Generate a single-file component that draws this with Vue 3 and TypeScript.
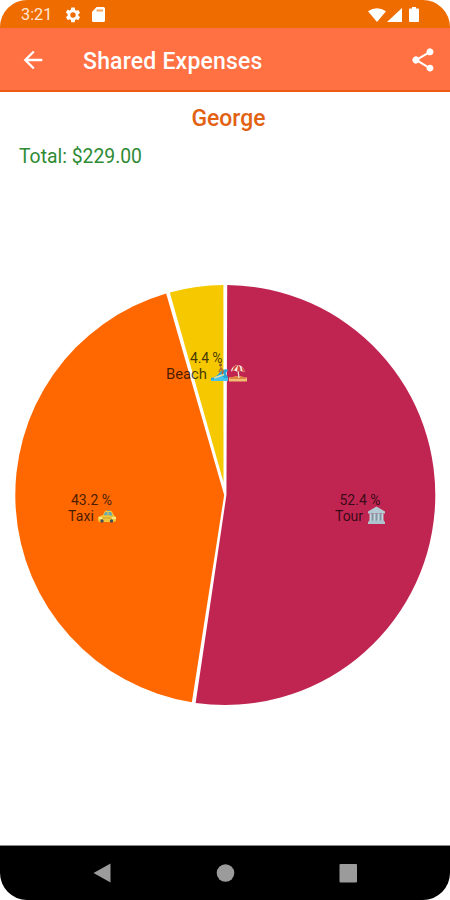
<script setup lang="ts">
interface Slice {
  name: string
  percent: number
  color: string
}

const slices: Slice[] = [
  { name: 'Tour', percent: 52.4, color: '#c02552' },
  { name: 'Taxi', percent: 43.2, color: '#ff6800' },
  { name: 'Beach', percent: 4.4, color: '#f5c800' },
]

const cx = 225.3
const cy = 403
const radius = 210
const separator = 3.8

function point(angle: number, r: number): [number, number] {
  return [cx + r * Math.sin(angle), cy - r * Math.cos(angle)]
}

let cursor = 0
const sectors = slices.map((slice) => {
  const start = cursor
  const end = start + (slice.percent / 100) * Math.PI * 2
  cursor = end
  const inset = separator / 2 / radius
  const [x1, y1] = point(start + inset, radius)
  const [x2, y2] = point(end - inset, radius)
  const mid = (start + end) / 2
  const halfAngle = Math.min((end - start) / 2, Math.PI / 2)
  const tip = (separator / 2) * (halfAngle < 1 ? 0.95 / Math.sin(halfAngle) : 0.6)
  const [x0, y0] = point(mid, tip)
  const large = end - start > Math.PI ? 1 : 0
  return { ...slice, d: `M${x0} ${y0}L${x1} ${y1}A${radius} ${radius} 0 ${large} 1 ${x2} ${y2}Z` }
})
</script>

<template>
  <div class="screen">
    <div class="status">
      <span class="clock">3:21</span>
      <svg class="gear" width="18" height="18" viewBox="0 0 24 24"><path d="M19.14 12.94c.04-.3.06-.61.06-.94s-.02-.64-.07-.94l2.03-1.58a.49.49 0 0 0 .12-.61l-1.92-3.32a.49.49 0 0 0-.59-.22l-2.39.96a7 7 0 0 0-1.62-.94l-.36-2.54A.48.48 0 0 0 13.92 2h-3.84a.48.48 0 0 0-.48.41l-.36 2.54c-.59.24-1.13.57-1.62.94l-2.39-.96a.49.49 0 0 0-.59.22L2.72 8.47a.48.48 0 0 0 .12.61l2.03 1.58a7.2 7.2 0 0 0 0 2.28l-2.03 1.58a.49.49 0 0 0-.12.61l1.92 3.32c.12.22.37.29.59.22l2.39-.96c.5.38 1.03.7 1.62.94l.36 2.54c.05.24.24.41.48.41h3.84c.24 0 .44-.17.48-.41l.36-2.54a7 7 0 0 0 1.62-.94l2.39.96c.22.08.47 0 .59-.22l1.92-3.32a.48.48 0 0 0-.12-.61zM12 15.6a3.6 3.6 0 1 1 0-7.2 3.6 3.6 0 0 1 0 7.2z" /></svg>
      <svg class="card" width="13" height="15" viewBox="0 0 13 15"><path d="M4.700 0H11.500Q13 0 13 1.500V13.500Q13 15 11.500 15H1.500Q0 15 0 13.500V4.700Z" /><path class="contacts" d="M4.500 2.600H11V4.400H4.500z" /></svg>
      <span class="spacer" />
      <svg width="18" height="14" viewBox="0 0 18 14"><path d="M0 3.200Q9-2.800 18 3.200L9 14Z" /></svg>
      <svg class="signal" width="15" height="14" viewBox="0 0 15 14"><path d="M15 0V14H0Z" /></svg>
      <svg class="battery" width="10" height="15" viewBox="0 0 10 15"><path d="M3 0H7V1.500H9Q10 1.500 10 2.500V14Q10 15 9 15H1Q0 15 0 14V2.500Q0 1.500 1 1.500H3Z" /></svg>
    </div>

    <header class="toolbar">
      <svg class="back" width="28" height="28" viewBox="0 0 24 24"><path d="M20 11H7.830l5.590-5.590L12 4l-8 8 8 8 1.410-1.410L7.830 13H20z" /></svg>
      <h1>Shared Expenses</h1>
      <svg class="share" width="28" height="28" viewBox="0 0 24 24"><path d="M18 16.080c-.76 0-1.440.3-1.960.77L8.910 12.700a3.300 3.300 0 0 0 0-1.400l7.050-4.110A3 3 0 1 0 15 5c0 .24.040.47.090.7L8.040 9.810a3 3 0 1 0 0 4.380l7.120 4.160a2.920 2.920 0 1 0 2.840-2.270z" /></svg>
    </header>

    <main>
      <svg class="chart" width="450" height="754" viewBox="0 0 450 754">
        <path v-for="s in sectors" :key="s.name" :d="s.d" :fill="s.color" />
        <g class="text">
          <text class="title" x="191.500" y="34" textLength="74" lengthAdjust="spacingAndGlyphs">George</text>
          <text class="total" x="19" y="70.500" textLength="123" lengthAdjust="spacingAndGlyphs">Total: $229.00</text>
          <text class="label" x="190" y="270.500" textLength="32.500">4.4 %</text>
          <text class="label" x="166" y="286.500" textLength="41" lengthAdjust="spacingAndGlyphs">Beach</text>
          <text class="label" x="71" y="412.500" textLength="41">43.2 %</text>
          <text class="label" x="68" y="428.500" textLength="26">Taxi</text>
          <text class="label" x="339.500" y="412.500" textLength="41">52.4 %</text>
          <text class="label" x="335" y="428.500" textLength="28">Tour</text>
        </g>
        <!-- surfer -->
        <g transform="translate(211 273)">
          <path d="M0 16V13Q6 12 9 7Q13 3 17.500 5Q13 8 17 12V16Z" fill="#2aa5d8" />
          <path d="M0 15Q7 13 10 9Q12 14 17 13V16H0Z" fill="#45c1ea" />
          <path d="M3 13L13 9.500" stroke="#e8e0a0" stroke-width="1.500" />
          <path d="M8 7L10 3L12 6L11 9" fill="none" stroke="#b86b32" stroke-width="1.600" />
          <circle cx="9.500" cy="0" r="1.500" fill="#8e5a2a" />
        </g>
        <!-- beach umbrella -->
        <g transform="translate(229 273)">
          <path d="M0 12.500H18V16.500H0Z" fill="#f2bd70" />
          <path d="M1 13L6 11H12L17 13V14H1Z" fill="#e18345" />
          <path d="M9 5L10 13" stroke="#e9e0d6" stroke-width="1.200" />
          <path d="M2 6.500Q3 0 9 0Q15 1 16 7L11.500 6L8 6.500L5 5.500Z" fill="#f3f0ed" />
          <path d="M5 1.500Q7 0 9 0L5 5.500L3 6ZM9 0Q12 2 11.500 6L8 6.500ZM12.500 1.500Q15.500 3 16 7L13.500 6Z" fill="#d7443b" />
        </g>
        <!-- taxi -->
        <g transform="translate(98 418)">
          <path d="M5 5L7 1Q11-.5 14 1.500L16 5.500L18 7V11L16 12H1L0 10V7Z" fill="#f3c638" />
          <path d="M5.500 5L7.500 2H9.500V5.500ZM10.500 2H13L14.500 5.500H10.500Z" fill="#65a9b4" />
          <path d="M9 0H12V1H9Z" fill="#78949c" />
          <path d="M1 8H4M14 8H18" stroke="#fff0a4" stroke-width="1.300" />
          <path d="M5 8H13" stroke="#c5a02c" stroke-width="1" />
          <circle cx="4" cy="11" r="1.700" fill="#46505a" />
          <circle cx="13.500" cy="11" r="1.700" fill="#46505a" />
        </g>
        <!-- classical building -->
        <g transform="translate(368 414.500)">
          <path d="M0 5L8.500 0L17 5V7H0Z" fill="#b2cbd5" />
          <path d="M2 7H15V15H2Z" fill="#8195a2" />
          <path d="M2.500 7V15M6.500 7V15M10.500 7V15M14.500 7V15" stroke="#c5d8df" stroke-width="1.900" />
          <path d="M1 14H16V15H17V17.500H0V15H1Z" fill="#adc3ce" />
        </g>
      </svg>
    </main>

    <nav>
      <svg width="450" height="54" viewBox="0 0 450 54">
        <path d="M110.500 17.500V36.500L93.500 27Z" />
        <circle cx="225.500" cy="27" r="8.800" />
        <rect x="339.500" y="18" width="17.500" height="18.500" rx="1" />
      </svg>
    </nav>
  </div>
</template>

<style>
body {
  margin: 0;
  background: #fff;
}
</style>

<style scoped>
.screen {
  display: flex;
  flex-direction: column;
  width: 450px;
  height: 900px;
  overflow: hidden;
  border-radius: 27px;
  background: #fff;
  font-family: Roboto, sans-serif;
}
svg {
  display: block;
  flex: none;
}
.status {
  display: flex;
  align-items: center;
  box-sizing: border-box;
  height: 28px;
  padding: 1px 31px 0 21px;
  background: #ef6c00;
  fill: #fff;
}
.clock {
  width: 43px;
  padding-top: 1px;
  color: #ffe6d5;
  font-size: 16.300px;
  line-height: 20px;
}
.card {
  margin-left: 10px;
}
.contacts {
  fill: #f6a25c;
}
.spacer {
  flex: 1;
}
.signal {
  margin-left: 1px;
}
.battery {
  margin-left: 7px;
}
.toolbar {
  display: flex;
  align-items: center;
  box-sizing: border-box;
  height: 64px;
  padding: 1px 13px 0 18.500px;
  border-bottom: 2px solid #f05a14;
  background: #ff7043;
  fill: #fff;
}
h1 {
  flex: 1;
  margin: 0 0 0 36.500px;
  padding-top: 4px;
  color: #fff;
  font-size: 23px;
  font-weight: 500;
  line-height: 30px;
  letter-spacing: 0.200px;
}
main {
  height: 753px;
}
.title {
  fill: #e26112;
  font-size: 23px;
  font-weight: 500;
}
.total {
  fill: #2e8b35;
  font-size: 20px;
}
.label {
  fill: #000;
  fill-opacity: 0.74;
  font-size: 14px;
}
nav {
  box-sizing: border-box;
  height: 55px;
  border-top: 1px solid #888;
  background: #000;
  fill: #9b9b9b;
}
</style>
